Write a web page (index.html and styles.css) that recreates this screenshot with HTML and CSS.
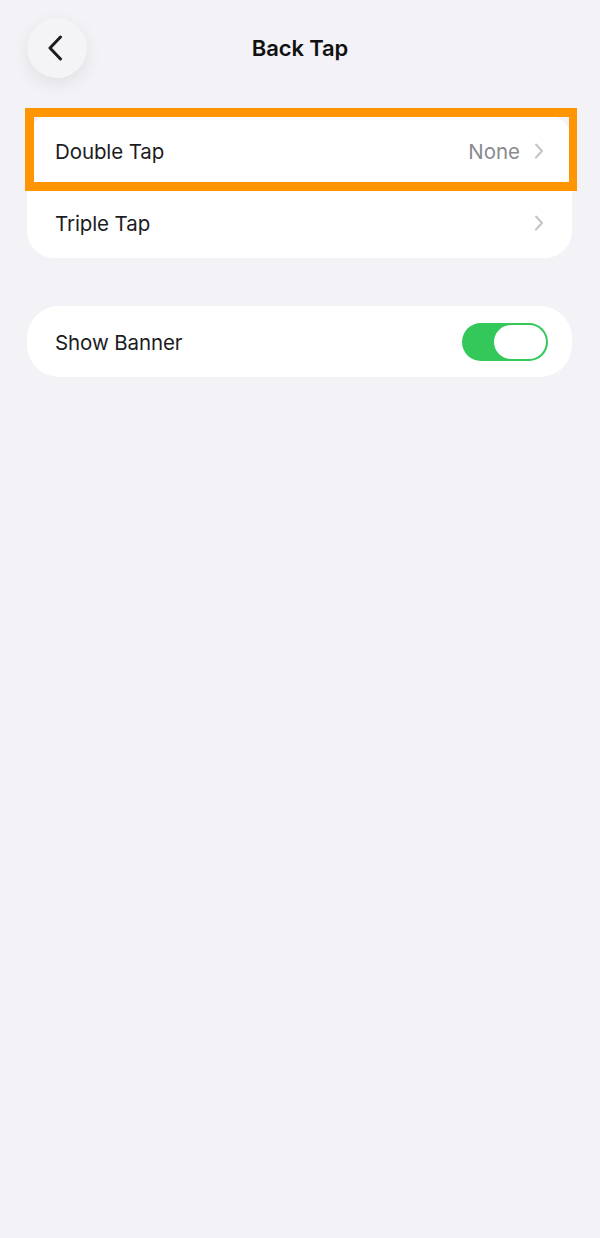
FILE: index.html
```html
<!DOCTYPE html>
<html lang="en">
<head>
<meta charset="utf-8">
<title>Back Tap</title>
<link rel="stylesheet" href="styles.css">
</head>
<body>
<div class="screen">
  <header class="nav">
    <button class="back" aria-label="Back">
      <svg width="16" height="26" viewBox="0 0 16 26"><path d="M13.5 2 L3 13 L13.5 24" fill="none" stroke="#1c1c1e" stroke-width="3" stroke-linecap="round" stroke-linejoin="round"/></svg>
    </button>
    <h1 class="title">Back Tap</h1>
    <span class="spacer"></span>
  </header>

  <section class="card">
    <div class="row highlighted">
      <span class="label">Double Tap</span>
      <span class="value">None</span>
      <svg class="chev" width="10" height="16" viewBox="0 0 10 16"><path d="M2 1.5 L8 8 L2 14.5" fill="none" stroke="#c4c4c7" stroke-width="2" stroke-linecap="round" stroke-linejoin="round"/></svg>
      <span class="highlight"></span>
    </div>
    <div class="row">
      <span class="label">Triple Tap</span>
      <svg class="chev" width="10" height="16" viewBox="0 0 10 16"><path d="M2 1.5 L8 8 L2 14.5" fill="none" stroke="#c4c4c7" stroke-width="2" stroke-linecap="round" stroke-linejoin="round"/></svg>
    </div>
  </section>

  <section class="card card-single">
    <div class="row toggle-row">
      <span class="label">Show Banner</span>
      <span class="toggle"><span class="knob"></span></span>
    </div>
  </section>
</div>
</body>
</html>
```
FILE: styles.css
```css
html, body {
  margin: 0;
  padding: 0;
  background: #f2f2f7;
}
body {
  font-family: Inter, "Noto Sans", "Liberation Sans", sans-serif;
  color: #1c1c1e;
  width: 600px;
  height: 1238px;
}
.screen {
  padding: 18px 27px 0 27px;
}
.nav {
  display: grid;
  grid-template-columns: 60px 1fr 60px;
  align-items: center;
  height: 60px;
}
.back {
  width: 60px;
  height: 60px;
  border-radius: 50%;
  border: none;
  background: #f4f4f6;
  box-shadow: 0 6px 18px rgba(0, 0, 0, 0.08);
  display: flex;
  align-items: center;
  justify-content: center;
  padding: 0 4px 0 0;
}
.title {
  margin: 0;
  text-align: center;
  font-size: 22px;
  font-weight: 600;
  letter-spacing: -0.1px;
  color: #111;
}
.card {
  margin-top: 36px;
  background: #fff;
  border-radius: 27px;
  width: 545px;
}
.card-single {
  margin-top: 48px;
  border-radius: 32px;
}
.row {
  position: relative;
  display: flex;
  align-items: center;
  height: 72px;
  padding: 0 28px;
  font-size: 20.5px;
}
.row .label,
.row .value {
  padding-top: 2px;
}
.label {
  flex: 1;
  letter-spacing: -0.1px;
}
.value {
  color: #8a8a8e;
  margin-right: 14px;
}
.chev {
  display: block;
  margin-top: 2px;
}
.highlight {
  position: absolute;
  left: -2px;
  right: -5px;
  top: -6px;
  bottom: -5px;
  border: 9px solid #ff9500;
  border-right-width: 8px;
  border-bottom-width: 9px;
  pointer-events: none;
}
.toggle-row {
  height: 71px;
  padding-right: 24px;
}
.toggle {
  width: 86px;
  height: 38px;
  border-radius: 19px;
  background: #34c759;
  display: flex;
  align-items: center;
  justify-content: flex-end;
  padding: 2px;
  box-sizing: border-box;
}
.knob {
  width: 52px;
  height: 34px;
  border-radius: 17px;
  background: #fff;
}
```
